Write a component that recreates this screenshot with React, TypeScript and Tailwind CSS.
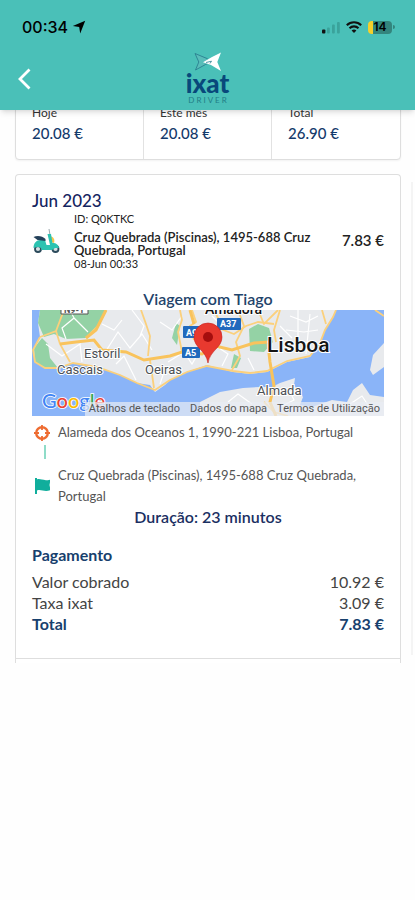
import React from 'react';

const summary = [
  { label: 'Hoje', value: '20.08 €' },
  { label: 'Este mês', value: '20.08 €' },
  { label: 'Total', value: '26.90 €' },
];

const payment = [
  { label: 'Valor cobrado', value: '10.92 €' },
  { label: 'Taxa ixat', value: '3.09 €' },
];

const StatusBar: React.FC = () => (
  <div className="flex h-[38px] items-center justify-between pt-4 pr-5 pl-[22px] text-black">
    <div className="flex items-center gap-1 font-['Inter',sans-serif] text-base font-medium">
      <span>00:34</span>
      <svg width="14" height="14" viewBox="0 0 14 14" fill="currentColor" aria-hidden="true">
        <path d="M13.2 .8 8.2 13.4 7.2 7 .8 6Z" />
      </svg>
    </div>
    <div className="flex items-center gap-1.5">
      <svg width="18" height="13" viewBox="0 0 18 13" aria-hidden="true">
        <rect x="0" y="8.5" width="3.4" height="4" rx="1" fill="#111" />
        <g fill="#3aa39b">
          <rect x="5" y="6.5" width="2.8" height="6" rx="1" />
          <rect x="10" y="3.5" width="2.8" height="9" rx="1" />
          <rect x="15" y="1" width="2.8" height="11.5" rx="1" />
        </g>
      </svg>
      <svg width="16" height="12" viewBox="0 0 16 12" fill="none" stroke="#111" strokeWidth="2.1" aria-hidden="true">
        <path d="M.8 4.3C4.8 .3 11.2 .3 15.2 4.3" />
        <path d="M3.5 7.2C6 4.8 10 4.8 12.5 7.2" />
        <path d="M8 12 5.6 9.5C7 8.2 9 8.2 10.4 9.5Z" fill="#111" stroke="none" />
      </svg>
      <div className="flex items-center">
        <div className="flex h-[13px] w-6 items-center justify-center rounded bg-linear-to-r from-[#f5d02c] from-20% to-[#33857d] to-20% font-['Inter',sans-serif] text-xs font-semibold">
          14
        </div>
        <div className="ml-px h-1 w-0.5 rounded-r bg-[#33857d]" />
      </div>
    </div>
  </div>
);

const Logo: React.FC = () => (
  <div className="flex flex-col items-center font-['Lato',sans-serif]">
    <svg width="28" height="20" viewBox="0 0 28 20" aria-hidden="true">
      <path d="M1 1.5 13 6.5 17 10 11.5 12.5 1.5 18 4.8 10Z" fill="#58bdb9" stroke="#2a7f90" strokeWidth=".9" />
      <path d="M27 .5 18 5 9 10.2 17 13 27 19 23.3 10Z" fill="#fff" />
      <path d="M12 10.5 17.5 9.2 16 11.5" fill="none" stroke="#2a7f90" strokeWidth=".8" />
    </svg>
    <span className="text-[26px] leading-[22px] font-black text-[#08487b]">ixat</span>
    <span className="pl-0.5 text-[8px] leading-3 tracking-[2px] text-[#227e87]">DRIVER</span>
  </div>
);

const Scooter: React.FC = () => (
  <svg width="28" height="26" viewBox="0 0 28 26" className="shrink-0" aria-hidden="true">
    <path d="M17 1 18 7" stroke="#9aa7ad" />
    <path d="M18 8c4 1 5 4 4 7l-3-1Z" fill="#f2c64b" />
    <circle cx="6" cy="21" r="3" fill="#d6e0e2" stroke="#2c4a5b" strokeWidth="1.8" />
    <circle cx="23.5" cy="21" r="3" fill="#d6e0e2" stroke="#2c4a5b" strokeWidth="1.8" />
    <path d="M15.5 6h3.5l1.5 9c4 0 6 2 6.5 5h-4l-3 2H9.5c0-3-3-4-8-2 0-5 3-8 7-8h4.5l1.5 5h3.5Z" fill="#2cc3b1" />
    <path d="M1.5 9c4-2 9-1 12 2v2l-8-1Z" fill="#24405a" />
  </svg>
);

const TripMap: React.FC = () => (
  <div className="relative">
    <svg viewBox="0 0 352 106" className="block w-full" role="img" aria-label="Lisboa" fontFamily="Roboto, sans-serif">
      <rect width="352" height="106" fill="#8ab4f8" />
      <path
        d="M8 0 6 13 8 27 1 40 3 52 13 58 26 58 41 53 65 57 88 65 105 73 118 75 123 82 133 75 138 70 155 62 175 55 201 62 218 64 235 62 255 52 278 47 288 33 293 20 301 7 304 0Z"
        fill="#e8eaed"
      />
      <path d="M168 92 188 82 211 78 228 77 240 77 248 73 263 68 262 75 271 87 268 95 280 97 300 90 315 92 321 80 330 73 338 85 352 87V106H168Z" fill="#e8eaed" />
      <path d="M352 33 341 45 338 60 341 65 352 57Z" fill="#e8eaed" />
      <g fill="#94d2a5">
        <path d="M8 0H74L66 16 54 28 34 29 22 24 12 27 9 20 6 13Z" />
        <path d="M2 38 10 28 16 34 18 48 26 58H13L3 52Z" />
        <path d="M217 19 226 14 237 18 241 32 232 42 218 41Z" />
        <path d="M202 44 209 48 205 58 199 58Z" />
        <path d="M144 13 148 16 145 35 140 28Z" />
      </g>
      <g fill="none" stroke="#fff" strokeWidth="1.2">
        <path d="M34 29 30 18 42 8 38 0M42 8 56 22M14 34 30 46 48 34 50 52M62 30 72 44 86 22 98 38 110 24 120 40M84 54 92 46 104 70M100 0 112 16 108 26M136 52 152 42 160 54 168 40M90 10 82 20 70 14M128 12 140 20 150 6M120 56 132 62 128 74" />
        <path d="M258 6 274 12 286 6M254 20 272 22 286 20M258 34 278 32M266 0V42M278 4 274 44M248 16 260 28M180 6 192 18 206 14M184 36 196 44 190 56M216 48 222 60M196 92 206 84 220 94M256 78 262 90 250 96M318 94 330 86 338 98" />
      </g>
      <g fill="none" stroke="#fbd07c" strokeWidth="1.8">
        <path d="M8 27 1 40 3 52 13 58 26 58 41 53 65 57 88 65 105 73 123 80 138 70 155 62 175 56 201 61 218 63 235 61 255 51 278 46 288 33 293 20 301 7 304 0" />
        <path d="M8 27 24 21 32 0M24 21 28 34 38 52M54 28 66 16 74 0M109 0 114 14 118 26 116 46M148 0 150 10 146 22 150 42M118 50 122 78M160 0 164 12 158 16 162 30M186 18 202 24 214 16 226 12 242 14" />
        <path d="M206 0 212 16 204 32 208 46 200 60M182 0 188 12M226 0 232 14 246 0M248 0 242 20 244 32M290 0 294 14M343 0 352 6M232 92 242 102 256 106M172 16 180 30 188 38" />
      </g>
      <g fill="none" stroke="#f9c35c" strokeWidth="3">
        <path d="M28 34 44 32 62 30 70 40 94 42 112 50 138 46 150 42 170 44 184 36 200 40 222 33 238 32" />
        <path d="M54 28 64 20 74 0M158 0 162 14M236 34 238 52 242 76 238 92 244 106" />
      </g>
      <path d="M29-3H56V4H29Z" fill="#fff" stroke="#555" />
      <text x="32" y="3" fontSize="9" fontWeight="700" fill="#555">N9-1</text>
      <g fill="#2069bd">
        <rect x="151" y="16" width="20" height="12" rx="1" />
        <rect x="150" y="37" width="18" height="11" rx="1" />
        <rect x="185" y="8" width="24" height="12" rx="1" />
      </g>
      <g fill="#fff" fontSize="9" fontWeight="700">
        <text x="154" y="26">A9</text>
        <text x="153" y="46">A5</text>
        <text x="188" y="17">A37</text>
      </g>
      <g fill="#4c5055" stroke="#fff" strokeWidth="2" paintOrder="stroke" fontSize="13">
        <text x="52" y="48">Estoril</text>
        <text x="25" y="64">Cascais</text>
        <text x="113" y="64">Oeiras</text>
        <text x="225" y="85">Almada</text>
        <text x="173" y="4" fontSize="14" fontWeight="500" fill="#111">Amadora</text>
        <text x="235" y="42" fontSize="21" fontWeight="500" fill="#151515">Lisboa</text>
      </g>
      <path d="M176 53C174 40 162 38 162 27A14 14 0 0 1 190 27C190 38 178 40 176 53Z" fill="#e8392f" stroke="#c5221f" strokeWidth=".6" />
      <circle cx="176" cy="27" r="5" fill="#a50e0e" />
      <text x="10" y="98" fontFamily="Lato, sans-serif" fontSize="20" fontWeight="500" stroke="#fff" strokeWidth="1.6" paintOrder="stroke">
        <tspan fill="#4285f4">G</tspan>
        <tspan fill="#ea4335">o</tspan>
        <tspan fill="#fbbc04">o</tspan>
        <tspan fill="#4285f4">g</tspan>
        <tspan fill="#34a853">l</tspan>
        <tspan fill="#ea4335">e</tspan>
      </text>
    </svg>
    <div className="absolute right-0 bottom-0 flex h-[14px] items-center gap-2.5 bg-[#e9edf3]/70 px-1 font-['Roboto',sans-serif] text-[11px] whitespace-nowrap text-[#555]">
      <button type="button">Atalhos de teclado</button>
      <span>Dados do mapa</span>
      <a href="#termos">Termos de Utilização</a>
    </div>
  </div>
);

const App: React.FC = () => {
  return (
    <div className="min-h-screen overflow-x-hidden bg-[#fefefe] font-['Lato',sans-serif] text-[#333]">
      <header className="sticky top-0 z-10 h-[110px] bg-[#4ac0b8] shadow-md">
        <StatusBar />
        <div className="grid grid-cols-[1fr_auto_1fr] items-center pt-3.5">
          <button type="button" aria-label="Voltar" className="ml-4 w-fit p-0.5 text-white">
            <svg width="13" height="22" viewBox="0 0 13 22" fill="none" stroke="currentColor" strokeWidth="2.8" aria-hidden="true">
              <path d="M11.5 1.5 2 11 11.5 20.5" />
            </svg>
          </button>
          <Logo />
        </div>
      </header>

      <main className="-mt-3 pr-3.5 pl-[15px]">
        {/* Earnings summary */}
        <section className="grid grid-cols-3 divide-x divide-[#e2e2e2] rounded-b border border-[#dedede] bg-white shadow-xs">
          {summary.map((item) => (
            <div key={item.label} className="px-4 pt-1 pb-4">
              <p className="text-xs leading-5">{item.label}</p>
              <p className="text-[15px] leading-5 font-medium text-[#143a6b]">{item.value}</p>
            </div>
          ))}
        </section>

        {/* Month of trips */}
        <div className="relative mt-3.5">
          <section className="rounded-t border-x border-t border-[#dedede] bg-white pb-1">
            <div className="border-b border-[#dedede] px-4 pt-4 pb-6">
              <h2 className="text-[17px] leading-5 font-medium text-[#14245f]">Jun 2023</h2>
              <div className="flex items-center gap-3.5">
                <Scooter />
                <div className="flex-1 text-[11px] leading-[13px] text-[#222]">
                  <p className="leading-4">ID: Q0KTKC</p>
                  <p className="pt-1 text-[13px] font-semibold">Cruz Quebrada (Piscinas), 1495-688 Cruz Quebrada, Portugal</p>
                  <p>08-Jun 00:33</p>
                </div>
                <p className="ml-2 text-[15px] font-semibold text-[#222]">7.83 €</p>
              </div>

              <h3 className="pt-[18px] text-center text-base leading-[22px] font-semibold text-[#1f446b]">Viagem com Tiago</h3>
              <TripMap />

              <div className="text-[13px] leading-[21px] text-[#555]">
                <div className="flex items-center gap-2 pt-1.5">
                  <svg width="18" height="18" viewBox="0 0 18 18" fill="none" stroke="#ee6c31" aria-hidden="true">
                    <circle cx="10" cy="9" r="5.8" strokeWidth="2.4" />
                    <path d="M10 1v5M10 12v5M2 9h5M13 9h5" strokeWidth="1.8" />
                  </svg>
                  <p>Alameda dos Oceanos 1, 1990-221 Lisboa, Portugal</p>
                </div>
                <div className="mt-0.5 ml-3 h-3.5 w-0.5 bg-[#8fdcc8]" />
                <div className="mt-1.5 flex items-center gap-2">
                  <svg width="18" height="18" viewBox="0 0 18 18" fill="#10ae9c" className="shrink-0" aria-hidden="true">
                    <path d="M3 1h2v1.5C8 1 11 4.5 18.5 2.5L17.5 8 18.5 13C13 15.5 9 12 5 13.5V17H3Z" />
                  </svg>
                  <p>Cruz Quebrada (Piscinas), 1495-688 Cruz Quebrada, Portugal</p>
                </div>
              </div>
              <p className="text-center text-base leading-5 font-semibold text-[#1b2f62]">Duração: 23 minutos</p>

              <h3 className="pt-[18px] pb-1.5 text-base leading-5 font-bold text-[#17406d]">Pagamento</h3>
              <dl className="text-base leading-[21px] text-[#444]">
                {payment.map((row) => (
                  <div key={row.label} className="flex justify-between">
                    <dt>{row.label}</dt>
                    <dd>{row.value}</dd>
                  </div>
                ))}
                <div className="flex justify-between font-bold text-[#17406d]">
                  <dt>Total</dt>
                  <dd>7.83 €</dd>
                </div>
              </dl>
            </div>
          </section>
          {/* Edge of the next month */}
          <div className="absolute inset-y-2 -right-3 w-0.5 bg-[#f4f4f4]" />
        </div>
      </main>
    </div>
  );
};

export default App;
